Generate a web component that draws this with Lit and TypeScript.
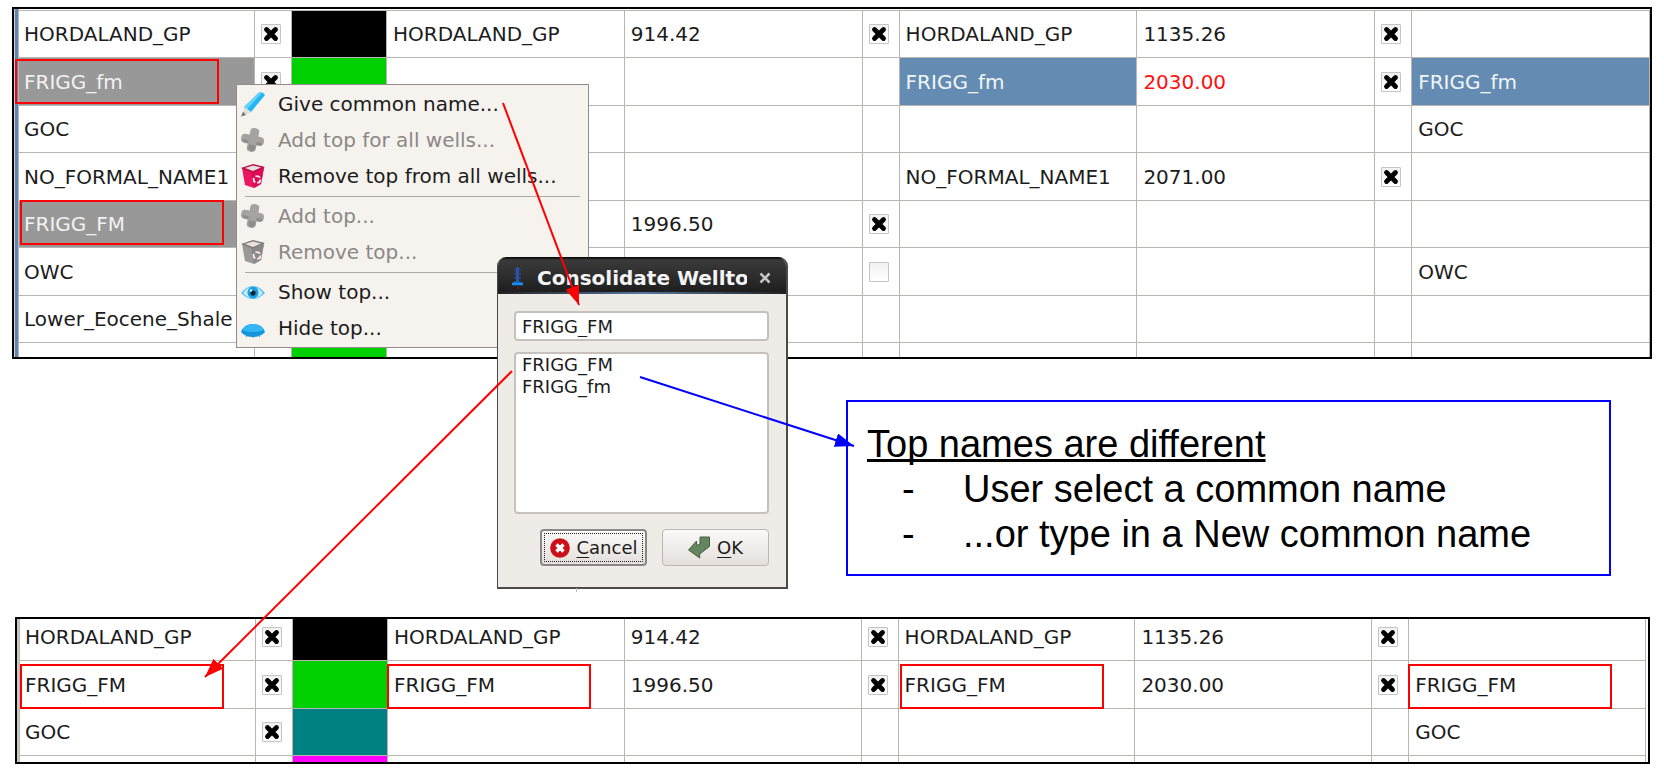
import { LitElement, html, svg, css, nothing } from "lit";
import { customElement, property } from "lit/decorators.js";

type Cell = { text?: string; tone?: string; check?: boolean; swatch?: string };

const t = (text: string, tone = ""): Cell => ({ text, tone });
const on: Cell = { check: true };
const off: Cell = { check: false };
const sw = (swatch: string): Cell => ({ swatch });
const __: Cell = {};

const BEFORE: Cell[][] = [
  [t("HORDALAND_GP"), on, sw("black"), t("HORDALAND_GP"), t("914.42"), on, t("HORDALAND_GP"), t("1135.26"), on, __],
  [t("FRIGG_fm", "muted"), on, sw("green"), __, __, __, t("FRIGG_fm", "picked"), t("2030.00", "alert"), on, t("FRIGG_fm", "picked")],
  [t("GOC"), __, __, __, __, __, __, __, __, t("GOC")],
  [t("NO_FORMAL_NAME1"), __, __, __, __, __, t("NO_FORMAL_NAME1"), t("2071.00"), on, __],
  [t("FRIGG_FM", "muted"), __, __, __, t("1996.50"), on, __, __, __, __],
  [t("OWC"), __, __, __, __, off, __, __, __, t("OWC")],
  [t("Lower_Eocene_Shale"), __, __, __, __, __, __, __, __, __],
  [__, __, sw("green"), __, __, __, __, __, __, __],
];

const AFTER: Cell[][] = [
  [t("HORDALAND_GP"), on, sw("black"), t("HORDALAND_GP"), t("914.42"), on, t("HORDALAND_GP"), t("1135.26"), on, __],
  [t("FRIGG_FM"), on, sw("green"), t("FRIGG_FM"), t("1996.50"), on, t("FRIGG_FM"), t("2030.00"), on, t("FRIGG_FM")],
  [t("GOC"), on, sw("teal"), __, __, __, __, __, __, t("GOC")],
  [__, __, sw("magenta"), __, __, __, __, __, __, __],
];

@customElement("well-table")
export class WellTable extends LitElement {
  @property({ attribute: false }) rows: Cell[][] = [];
  @property() label = "";

  static styles = css`
    :host { display: block; overflow: hidden; background: #fff; }
    table { width: 100%; margin-top: var(--scroll, 0); table-layout: fixed; border-collapse: separate; border-spacing: 0; }
    .first { width: 236px; }
    .tick { width: 37px; }
    .color { width: 95px; }
    tr { height: 47px; }
    tr:nth-child(even) { height: 48px; }
    td {
      box-sizing: border-box; padding: 0 0 0 6px; white-space: nowrap; color: #1c1c1c;
      border-right: 1px solid #b9b5b2; border-bottom: 1px solid #b9b5b2;
      font: 20px/24px "DejaVu Sans", sans-serif;
    }
    td:first-child { padding-left: 5px; }
    .muted { background: #989898; color: #f2f2f2; }
    .picked { background: #648cb3; color: #f2f6fa; }
    .alert { color: #ff1010; }
    .black { background: #000; }
    .green { background: #00cf00; }
    .teal { background: #008080; }
    .magenta { background: #f0f; }
    .box { position: relative; display: block; width: 20px; height: 20px; }
    input {
      appearance: none; display: block; box-sizing: border-box; width: 20px; height: 20px; margin: 0;
      border: 1px solid #c6c4c2; border-radius: 1px; background: linear-gradient(#f1f1f1, #fff);
    }
    .cross { position: absolute; inset: 0; pointer-events: none; }
  `;

  private cell(c: Cell, row: string) {
    if (c.check !== undefined) {
      return html`<td><span class="box"><input type="checkbox" aria-label="Use ${row}" .checked=${c.check} />${c.check
        ? html`<svg class="cross" width="20" height="20" viewBox="0 0 20 20"><path d="M5.500 5.500l9 9m0-9l-9 9" stroke="#000" stroke-width="4.800" stroke-linecap="round" /></svg>`
        : nothing}</span></td>`;
    }
    return html`<td class=${c.swatch ?? c.tone ?? ""}>${c.text ?? ""}</td>`;
  }

  render() {
    return html`<table aria-label=${this.label}>
      <colgroup>
        <col class="first" /><col class="tick" /><col class="color" /><col /><col /><col class="tick" /><col /><col /><col class="tick" /><col />
      </colgroup>
      <tbody>
        ${this.rows.map((r) => html`<tr>${r.map((c) => this.cell(c, r[0].text ?? "top"))}</tr>`)}
      </tbody>
    </table>`;
  }
}

const plus = svg`<g transform="rotate(12 12 12)"><rect x="7.500" y="0" width="9" height="24" rx="3.500" fill="#a5a2a0"/><rect x="0" y="7.500" width="23" height="9" rx="3.500" fill="#a5a2a0"/><path d="M9 17h7v3q0 3-3.500 3T9 20zM2 13h6v3H4q-2 0-2-3zM16 13h6q0 3-2 3h-4z" fill="#8f8c8a"/></g>`;
const bin = (a: string, b: string, c: string) => svg`
  <path d="M1 4l11-3 11 2-3 17-7 4-9-3z" fill=${a}/><path d="M10 9l13-5-3 16-7 4z" fill=${b}/>
  <path d="M0 4l12-4 12 3-12 6z" fill=${c}/><path d="M4 4l8-2.500 8 2-8 3.500z" fill="#e9e2de"/>
  <circle cx="16" cy="15.500" r="3.400" fill="none" stroke="#fbe6ec" stroke-width="1.900" stroke-dasharray="5 2"/>`;
const ICONS = {
  pencil: svg`<path d="M17 1.500Q21-1.500 24 3L10 20l-7-5z" fill="#22b6f6"/><path d="M17 1.500q2-1.500 4-.8L6 17.500 3 15z" fill="#66d2fb"/><path d="M3 15l7 5-7.500 4z" fill="#dedede"/><path d="M0 24.500l2-5 3 3.500z" fill="#777"/>`,
  plus,
  bin: bin("#ea1660", "#dd0a55", "#b80f4a"),
  binOff: bin("#9b9997", "#8b8987", "#7f7d7b"),
  eye: svg`<path d="M0 13Q12-1 24 13 12 25 0 13z" fill="#4cbcf2"/><path d="M2 13Q6 8 8 8q-2 6 1 10-4-1-7-5zM22 13q-4-5-6-5 2 6-1 10 4-1 7-5z" fill="#c4ebfb"/><circle cx="12" cy="12.500" r="5.500" fill="#1b9fe0"/><circle cx="12" cy="13" r="2.600" fill="#0b2030"/><circle cx="10" cy="10.500" r="1.300" fill="#d8f4ff"/>`,
  lid: svg`<path d="M0 16Q3 8 12 8t12 8q-4 5-12 5T0 16z" fill="#1595dc"/><path d="M1 14Q5 8 12 8t11 6q-11 4-22 0z" fill="#35b7f7"/><path d="M6 20l-1 1M12 21v1M18 20l1 1" stroke="#147" fill="none" opacity=".6"/>`,
};

type Entry = { icon: keyof typeof ICONS; text: string; off?: boolean } | "rule";
const MENU: Entry[] = [
  { icon: "pencil", text: "Give common name..." },
  { icon: "plus", text: "Add top for all wells...", off: true },
  { icon: "bin", text: "Remove top from all wells..." },
  "rule",
  { icon: "plus", text: "Add top...", off: true },
  { icon: "binOff", text: "Remove top...", off: true },
  "rule",
  { icon: "eye", text: "Show top..." },
  { icon: "lid", text: "Hide top..." },
];

@customElement("top-menu")
export class TopMenu extends LitElement {
  static styles = css`
    :host {
      display: block; box-sizing: border-box; width: 353px; padding: 1px 0;
      background: #f6f2ee; border: 1px solid #918d8a;
    }
    button {
      display: flex; align-items: center; gap: 13px; width: 100%; height: 36px; padding: 0 4px;
      border: 0; background: none; color: #1c1c1c; text-align: left; white-space: nowrap;
      font: 20px/24px "DejaVu Sans", sans-serif;
    }
    button:disabled { color: #8b8886; }
    hr { height: 1px; margin: 2px 8px 1px; border: 0; background: #aeaaa6; }
    svg { flex: none; overflow: visible; }
  `;
  render() {
    return MENU.map((e) =>
      e === "rule"
        ? html`<hr />`
        : html`<button role="menuitem" ?disabled=${e.off}><svg width="24" height="24" viewBox="0 0 24 24">${ICONS[e.icon]}</svg>${e.text}</button>`
    );
  }
}

@customElement("consolidate-dialog")
export class ConsolidateDialog extends LitElement {
  static styles = css`
    :host {
      display: block; box-sizing: border-box; width: 291px; overflow: hidden;
      border: solid #4a4a4a; border-width: 0 2px 2px 1px; border-radius: 9px 9px 0 0;
      background: #efebe7; color: #1c1c1c; font: 18px/22px "DejaVu Sans", sans-serif;
    }
    header {
      display: flex; align-items: center; box-sizing: border-box; height: 37px; padding: 4px 15px 0 13px;
      background:
        linear-gradient(90deg, #222, #5577a0 50%, #222) bottom / 100% 2px no-repeat,
        linear-gradient(#000, #3a3a3a 3px, #2a2a2a 60%, #1c1c1c);
    }
    h2 {
      flex: 1; min-width: 0; margin: 0 12px 0 13px; overflow: hidden; white-space: nowrap;
      color: #f4f4f4; font: bold 20px/26px "DejaVu Sans", sans-serif;
    }
    .close { display: block; width: 12px; height: 12px; padding: 0; border: 0; background: none; }
    .close svg, .logo { display: block; }
    form { display: flex; flex-direction: column; gap: 11px; padding: 17px 17px 21px 16px; }
    input, select {
      box-sizing: border-box; width: 100%; margin: 0; border: 2px solid #c6c1bc; border-radius: 4px;
      background: #fff; color: inherit; font: inherit; outline: 0;
    }
    input { height: 30px; padding: 0 6px; }
    select { height: 162px; padding: 0; overflow: hidden; }
    option { min-height: 22px; padding: 0 6px; line-height: 22px; }
    footer { display: flex; justify-content: flex-end; gap: 15px; padding-top: 4px; }
    .action {
      display: flex; align-items: center; justify-content: center; gap: 7px; box-sizing: border-box;
      width: 107px; height: 37px; padding: 0; border: 1px solid #bcb7b2; border-radius: 4px;
      background: linear-gradient(#fbfaf9, #e4dfdb); color: inherit; font: inherit;
    }
    .focused { border: 2px solid #8b8784; outline: 1px dotted #222; outline-offset: -5px; }
    u { text-decoration-skip-ink: none; text-underline-offset: 3px; }
  `;
  render() {
    return html`
      <header>
        <svg class="logo" width="13" height="24" viewBox="0 0 13 24"><path d="M5 1h3v14l4 2v2H1v-2l4-2z" fill="#1560b8"/><path d="M3 4h7M3 8h7M3 12h7" stroke="#1f4f92" stroke-width="1.500"/><path d="M6.500 1v14" stroke="#5a3f96"/><path d="M1 18h11" stroke="#1b8cf0" stroke-width="2.500"/><path d="M6 21h2v2H6z" fill="#7a1414"/></svg>
        <h2>Consolidate Welltops</h2>
        <button class="close" aria-label="Close"><svg width="12" height="12" viewBox="0 0 12 12"><path d="M1.500 1.500l9 9m0-9l-9 9" stroke="#c4c4c4" stroke-width="2.600"/></svg></button>
      </header>
      <form @submit=${(e: Event) => e.preventDefault()}>
        <input aria-label="Common name" value="FRIGG_FM" />
        <select aria-label="Top names" size="7"><option>FRIGG_FM</option><option>FRIGG_fm</option></select>
        <footer>
          <button type="button" class="action focused"><svg width="20" height="20" viewBox="0 0 20 20"><circle cx="10" cy="10" r="9.800" fill="#cc1018"/><path d="M6.500 6.500l7 7m0-7l-7 7" stroke="#fff" stroke-width="3.600"/></svg><span><u>C</u>ancel</span></button>
          <button class="action"><svg width="22" height="23" viewBox="0 0 22 23"><path d="M12 1h9.500v9.500L11.700 18v4L.5 14l8-9v4.500L12 8z" fill="#64855d" stroke="#46603f" stroke-linejoin="round"/></svg><span><u>O</u>K</span></button>
        </footer>
      </form>`;
  }
}

@customElement("app-root")
export class AppRoot extends LitElement {
  static styles = css`
    :host { display: block; position: relative; background: #fff; padding: 7px 12px 7px; }
    well-table { border: 2px solid #000; }
    .before {
      box-sizing: border-box; height: 352px; padding: 2px 0 0 5px;
      background:
        linear-gradient(90deg, #c9d3dc 1px, #5f86ad 1px 4px, #b9b5b2 4px 5px, transparent 5px),
        linear-gradient(#fff 1px, #b9b5b2 1px 2px, #fff 2px);
    }
    .after {
      --scroll: -5px;
      box-sizing: border-box; height: 147px; padding: 0 2px 0 3px; margin: 0 2px 0 3px;
      background: linear-gradient(90deg, #c9c6c3 2px, #b9b5b2 2px 3px, #fff 3px);
    }
    .note {
      margin: 41px 41px 41px 834px; padding: 20px 19px 17px; border: 2px solid #00f; color: #000;
      font: 38px/45px "Liberation Sans", Arial, sans-serif;
    }
    .note h1 { margin: 0; font: inherit; text-decoration: underline; text-decoration-thickness: 3px; text-decoration-skip-ink: none; }
    ul { margin: 0; padding: 0; list-style: none; }
    li { display: flex; padding-left: 35px; white-space: nowrap; }
    li::before { content: "-"; flex: none; width: 61px; }
    .menu { position: absolute; left: 236px; top: 84px; }
    .dialog { position: absolute; left: 497px; top: 257px; }
    .marks { position: absolute; left: 0; top: 0; pointer-events: none; }
  `;

  render() {
    const boxes = [[16, 60], [21, 201], [21, 665], [388, 665], [901, 665], [1409, 665]];
    return html`
      <well-table class="before" label="Well tops before" .rows=${BEFORE}></well-table>
      <section class="note">
        <h1>Top names are different</h1>
        <ul>
          <li>User select a common name</li>
          <li>...or type in a New common name</li>
        </ul>
      </section>
      <well-table class="after" label="Well tops after" .rows=${AFTER}></well-table>
      <top-menu class="menu" role="menu"></top-menu>
      <consolidate-dialog class="dialog" role="dialog" aria-label="Consolidate Welltops"></consolidate-dialog>
      <svg class="marks" width="1664" height="771" viewBox="0 0 1664 771" fill="none" stroke-width="2">
        <defs>
          ${["red", "blue"].map((c) => svg`<marker id=${c} markerUnits="userSpaceOnUse" markerWidth="20" markerHeight="16" refX="19" refY="7" orient="auto"><path d="M0 0L19 7 0 14z" fill=${c} stroke="none"/></marker>`)}
        </defs>
        ${boxes.map(([x, y]) => svg`<rect x=${x} y=${y} width="202" height="43" stroke="red"/>`)}
        <path d="M576.500 588v4" stroke="#b9b5b2" stroke-width="1" />
        <path d="M503 103L579 305" stroke="red" marker-end="url(#red)" />
        <path d="M512 371L205 677" stroke="red" marker-end="url(#red)" />
        <path d="M640 377L854 446" stroke="blue" marker-end="url(#blue)" />
      </svg>`;
  }
}
